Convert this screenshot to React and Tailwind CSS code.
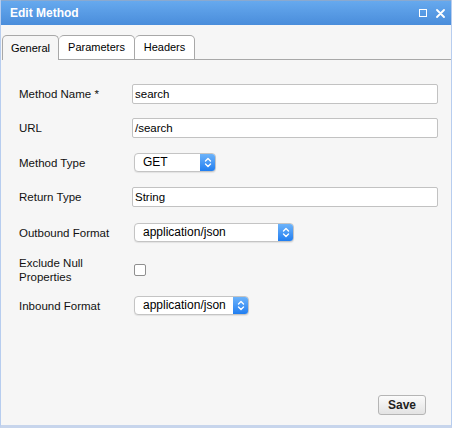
import React from 'react';

const font = { fontFamily: '"Liberation Sans", Arial, sans-serif' };

const Updown = () => (
  <svg width="8" height="11" viewBox="0 0 8 11" fill="none" stroke="white" strokeWidth="1.4" strokeLinecap="round" strokeLinejoin="round">
    <path d="M1.5 4 L4 1.5 L6.5 4" />
    <path d="M1.5 7 L4 9.5 L6.5 7" />
  </svg>
);

const Select = ({ value, width }) => (
  <div className={`flex h-[19px] items-stretch rounded-[4px] border border-[#c4c4c4] bg-white shadow-[0_1px_1px_rgba(0,0,0,0.08)] ${width}`}>
    <span className="flex-1 pl-[8px] text-[12px] leading-[17px] text-black">{value}</span>
    <span className="flex w-[15px] items-center justify-center rounded-r-[3px] bg-gradient-to-b from-[#6cb3fa] to-[#1f7ef0]">
      <Updown />
    </span>
  </div>
);

const TextInput = ({ value }) => (
  <div className="h-[20px] w-[306px] rounded-[2px] border border-[#c2c2c2] bg-white pl-[2px] text-[11.5px] leading-[18px] text-black">
    {value}
  </div>
);

const Row = ({ label, children, className = '' }) => (
  <div className={`flex items-center ${className}`}>
    <div className="w-[113px] text-[11.5px] leading-[14px] text-[#111]">{label}</div>
    {children}
  </div>
);

export default function App() {
  return (
    <div style={font} className="flex h-[428px] w-[452px] flex-col border-x border-b-[3px] border-x-[#b7cdef] border-b-[#c7d5ec] bg-[#f6f6f6]">
      <div className="flex h-[25px] items-center justify-between border-t border-[#8aa9cf] bg-gradient-to-b from-[#66a9ee] to-[#4a8ddb] pl-[9px] pr-[6px]">
        <span className="text-[12px] font-bold text-white">Edit Method</span>
        <div className="flex items-center gap-[9px]">
          <span className="h-[8px] w-[8px] border-[1.5px] border-white" />
          <svg width="9" height="9" viewBox="0 0 9 9" stroke="white" strokeWidth="1.8" strokeLinecap="round">
            <path d="M1 1 L8 8 M8 1 L1 8" />
          </svg>
        </div>
      </div>

      <div className="mt-[10px] flex h-[25px] items-end pl-[1px]">
        <div className="flex h-[25px] w-[57px] items-center justify-center rounded-t-[5px] border border-b-0 border-[#a8a8a8] bg-[#f6f6f6] text-[11px] text-black">
          General
        </div>
        <div className="flex h-[25px] w-[76px] items-center justify-center rounded-t-[5px] border border-l-0 border-[#a8a8a8] bg-white text-[11px] text-black">
          Parameters
        </div>
        <div className="flex h-[25px] w-[60px] items-center justify-center rounded-t-[5px] border border-l-0 border-[#a8a8a8] bg-white text-[11px] text-black">
          Headers
        </div>
        <div className="flex-1 border-b border-[#a8a8a8]" />
      </div>

      <div className="flex flex-1 flex-col pl-[18px]">
        <Row label="Method Name *" className="mt-[24px]">
          <TextInput value="search" />
        </Row>
        <Row label="URL" className="mt-[14px]">
          <TextInput value="/search" />
        </Row>
        <Row label="Method Type" className="mt-[15px]">
          <div className="pl-[2px]"><Select value="GET" width="w-[82px]" /></div>
        </Row>
        <Row label="Return Type" className="mt-[15px]">
          <TextInput value="String" />
        </Row>
        <Row label="Outbound Format" className="mt-[16px]">
          <div className="pl-[2px]"><Select value="application/json" width="w-[160px]" /></div>
        </Row>
        <Row label={<>Exclude Null<br />Properties</>} className="mt-[14px]">
          <div className="ml-[2px] h-[12px] w-[12px] rounded-[2px] border border-[#8f8f8f] bg-white" />
        </Row>
        <Row label="Inbound Format" className="mt-[12px]">
          <div className="pl-[2px]"><Select value="application/json" width="w-[115px]" /></div>
        </Row>

        <div className="mt-auto mb-[10px] flex justify-end pr-[25px]">
          <button className="h-[20px] w-[48px] rounded-[3px] border border-[#b5b5b5] bg-gradient-to-b from-[#fbfbfb] to-[#e3e3e3] text-[12px] font-bold text-[#222]">
            Save
          </button>
        </div>
      </div>
    </div>
  );
}
